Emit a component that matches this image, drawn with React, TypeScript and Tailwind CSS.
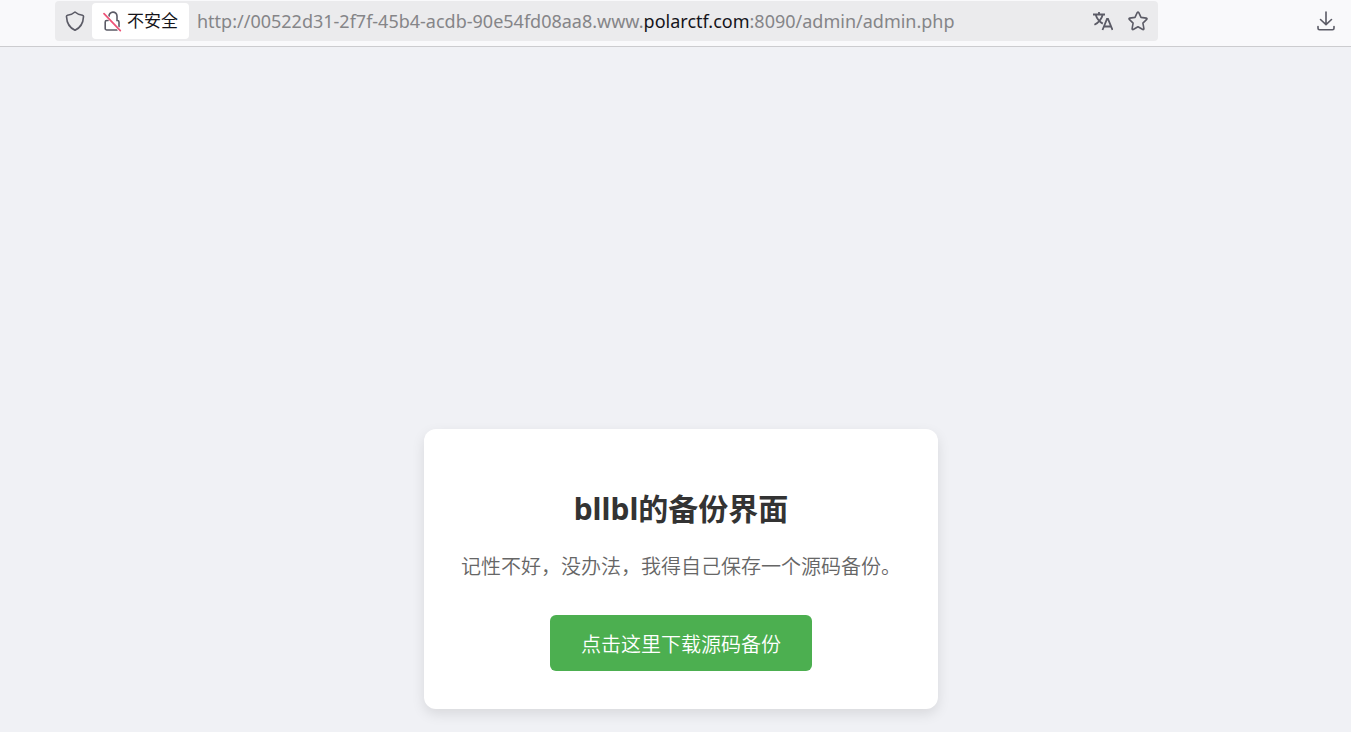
function ShieldIcon() {
  return (
    <svg viewBox="0 0 20 20" className="h-5 w-5" fill="none" stroke="#5b5b66" strokeWidth="1.6" strokeLinejoin="round" aria-hidden="true">
      <path d="M10 1C8.200 2.700 4.900 3.900 2.500 4.200Q1.400 4.400 1.500 5.600C1.800 12 4.300 16.600 10 19.300C15.700 16.600 18.200 12 18.500 5.600Q18.600 4.400 17.500 4.200C15.100 3.900 11.800 2.700 10 1Z" />
    </svg>
  );
}

function InsecureLockIcon() {
  return (
    <svg viewBox="0 0 20 22" className="h-[22px] w-5" fill="none" strokeWidth="1.6" strokeLinecap="round" aria-hidden="true">
      <path d="M6 6.200a4 4 0 0 1 8-.2V10.500h.4a1.600 1.600 0 0 1 1.600 1.600v4.600M5.200 10.500H3.800a1.600 1.600 0 0 0-1.600 1.600v6.300a1.600 1.600 0 0 0 1.600 1.600H14" stroke="#5b5b66" />
      <path d="M1 3.600L17.300 20.600" stroke="#fff" strokeWidth="2.800" />
      <path d="M1 3.600L17.300 20.600" stroke="#ee5277" strokeWidth="1.700" />
    </svg>
  );
}

function TranslateIcon() {
  return (
    <svg viewBox="0 0 20 20" className="h-5 w-5" fill="none" stroke="#5b5b66" strokeWidth="1.8" aria-hidden="true">
      <path d="M0 3.500h12M6 1v2.500M2.600 3.500C3.800 7.500 6.500 10.800 9.800 12.600M9.800 3.500C8.600 8 5.500 11.800 1.400 13.700" />
      <path d="M9.500 19L14 8h1L19.500 19M11.200 15.500h6.600" />
    </svg>
  );
}

function StarIcon() {
  return (
    <svg viewBox="0 0 20 20" className="h-5 w-5" fill="none" stroke="#5b5b66" strokeWidth="1.6" strokeLinejoin="round" aria-hidden="true">
      <path d="M9.200 1.600Q10 .4 10.800 1.600L13 6.400L18.300 7.100Q19.500 7.400 18.700 8.400L14.900 12.100L15.900 17.600Q15.900 18.900 14.800 18.500L10 15.800L5.200 18.500Q4.100 18.900 4.100 17.600L5.100 12.100L1.300 8.400Q.5 7.400 1.700 7.100L7 6.400Z" />
    </svg>
  );
}

function DownloadIcon() {
  return (
    <svg viewBox="0 0 20 20" className="h-5 w-5" fill="none" stroke="#5b5b66" strokeWidth="1.6" strokeLinecap="round" strokeLinejoin="round" aria-hidden="true">
      <path d="M10 1v12.500M4.500 8.500l5.500 5.200l5.500-5.200" />
      <path d="M2 15.500v1.700a1.500 1.500 0 0 0 1.500 1.500h13a1.500 1.500 0 0 0 1.500-1.500v-1.700" />
    </svg>
  );
}

function BrowserToolbar() {
  return (
    <header className="flex items-start justify-between border-b border-[#cccccf] bg-[#f9f9fb] pt-px pr-[15px] pb-[5px] pl-[55px]">
      <div className="flex h-10 min-w-0 flex-1 items-center rounded bg-[#ebebed] px-2.5">
        <button type="button" aria-label="跟踪保护" className="shrink-0">
          <ShieldIcon />
        </button>
        <button type="button" className="mr-2 ml-[7px] flex h-9 shrink-0 items-center gap-1 rounded bg-white px-[11px] text-[17px] leading-6 text-[#15141a]">
          <InsecureLockIcon />
          <span>不安全</span>
        </button>
        <div
          role="textbox"
          aria-label="地址栏"
          contentEditable
          suppressContentEditableWarning
          spellCheck={false}
          className="min-w-0 flex-1 overflow-hidden text-[18px] leading-6 whitespace-nowrap text-[#858588] outline-none"
        >
          http://00522d31-2f7f-45b4-acdb-90e54fd08aa8.www.<span className="text-[#15141a]">polarctf.com</span>:8090/admin/admin.php
        </div>
        <div className="flex shrink-0 gap-[15px]">
          <button type="button" aria-label="翻译此页面">
            <TranslateIcon />
          </button>
          <button type="button" aria-label="添加书签">
            <StarIcon />
          </button>
        </div>
      </div>
      <button type="button" aria-label="下载" className="ml-[158px] flex h-10 shrink-0 items-center">
        <DownloadIcon />
      </button>
    </header>
  );
}

export default function App() {
  return (
    <div className="flex min-h-screen flex-col bg-[#f0f1f5] font-['Noto_Sans','Noto_Sans_CJK_SC',sans-serif]">
      <BrowserToolbar />
      <main className="flex flex-1 items-end justify-center pb-[23px] pl-[11px]">
        <section className="rounded-xl bg-white px-[37px] pt-[60px] pb-[38px] text-center shadow-[0_5px_13px_rgba(0,0,0,0.1)]">
          <h1 className="text-3xl leading-10 font-bold text-[#333]">bllbl的备份界面</h1>
          <p className="mt-[22px] text-xl leading-8 font-[350] text-[#666]">记性不好，没办法，我得自己保存一个源码备份。</p>
          <a href="#download" className="mt-8 inline-block rounded-md bg-[#4caf50] px-[31px] pt-[15px] pb-[11px] align-top text-xl leading-[30px] font-[350] text-white">
            点击这里下载源码备份
          </a>
        </section>
      </main>
    </div>
  );
}
